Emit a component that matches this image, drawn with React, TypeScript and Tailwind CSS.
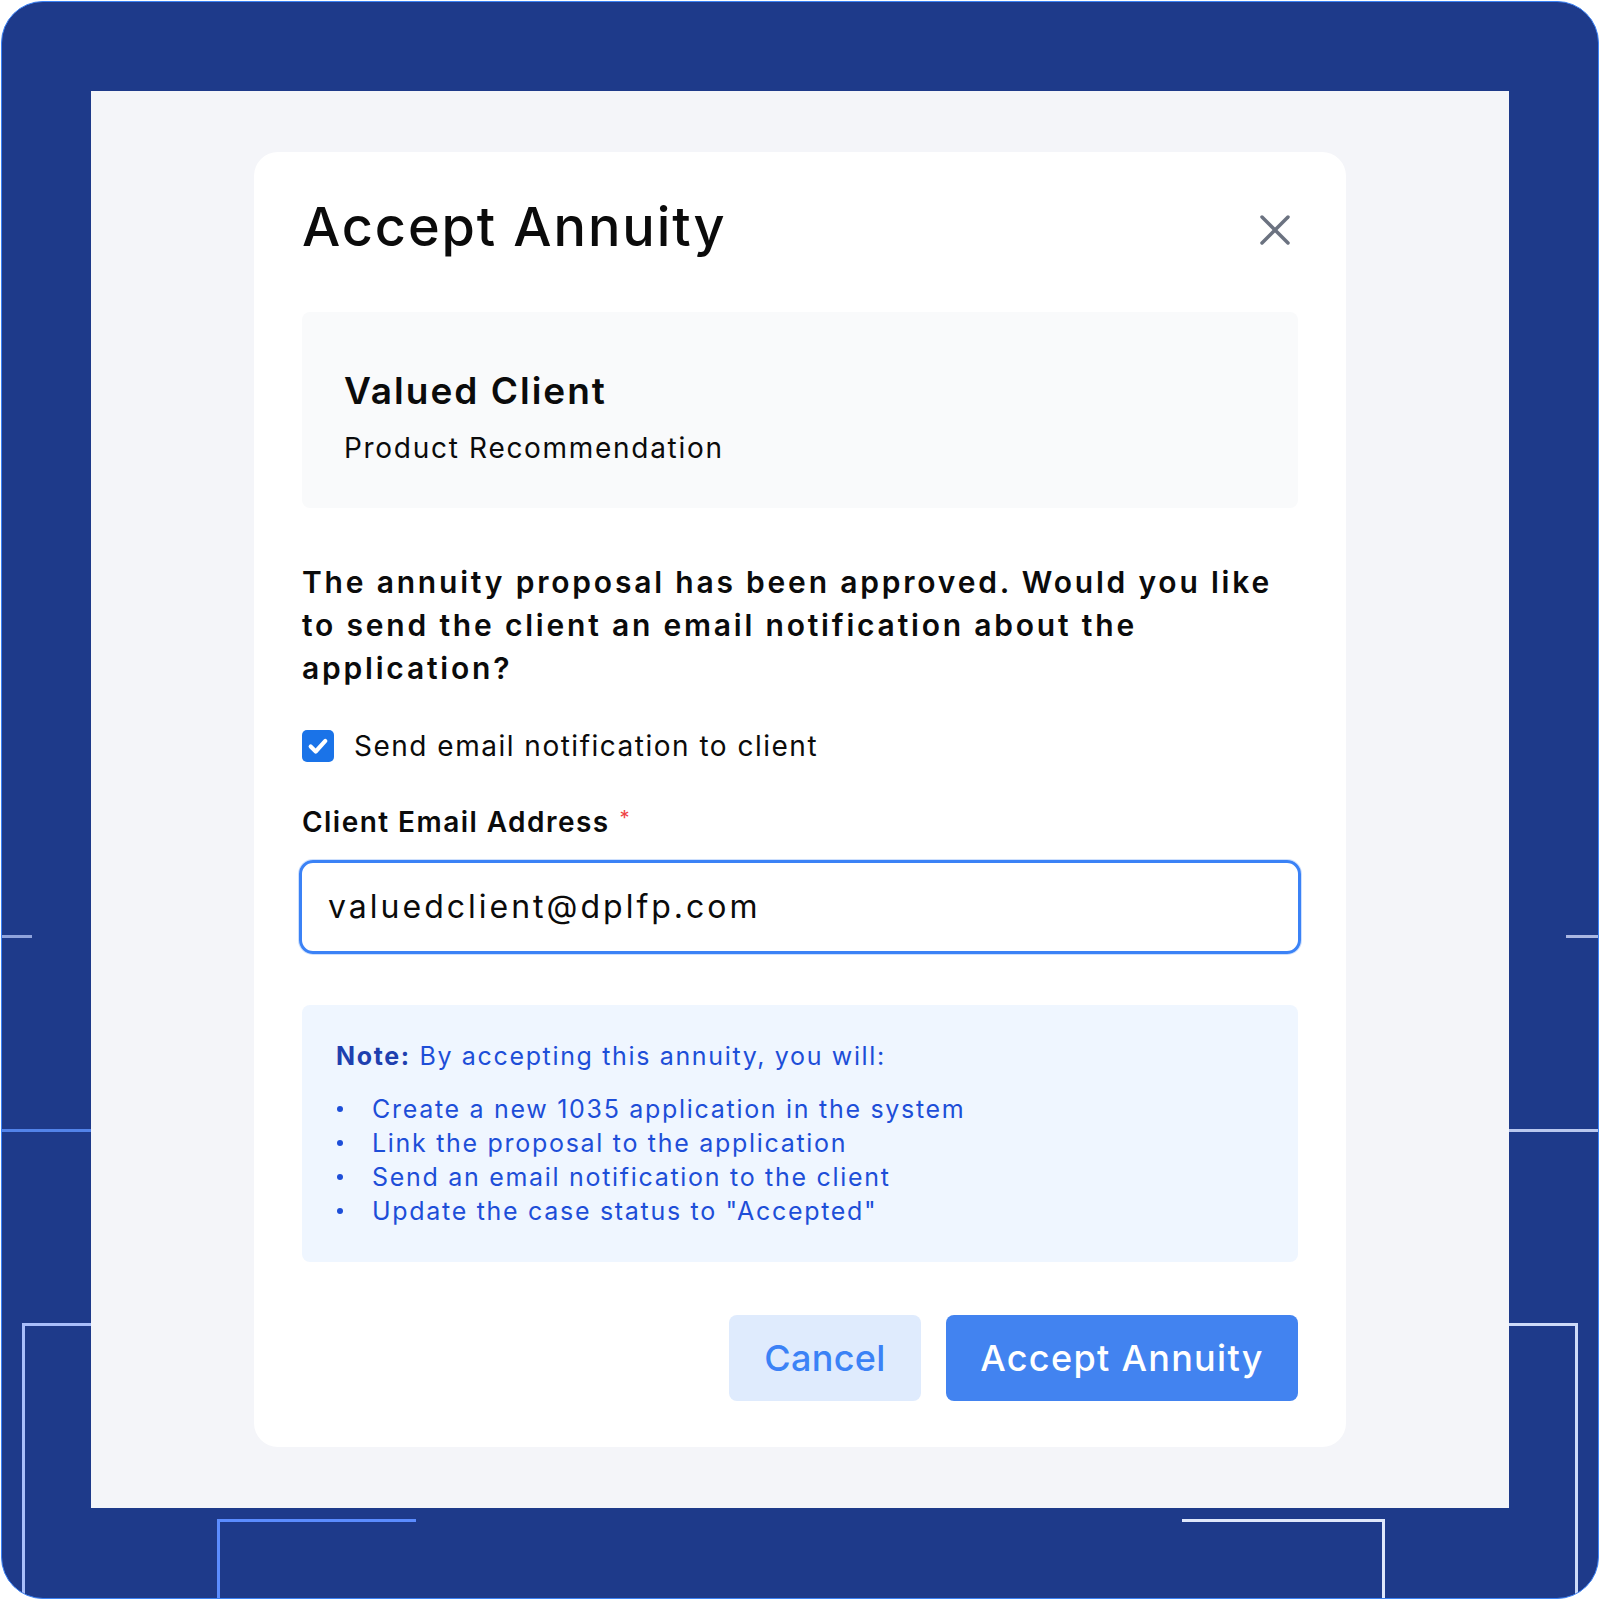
import React, { useState } from 'react';

const font = { fontFamily: 'Inter, "Noto Sans", sans-serif' };

export default function App() {
  const [sendEmail, setSendEmail] = useState(true);
  const [email, setEmail] = useState('valuedclient@dplfp.com');

  const steps = [
    'Create a new 1035 application in the system',
    'Link the proposal to the application',
    'Send an email notification to the client',
    'Update the case status to "Accepted"',
  ];

  return (
    <div className="w-[1600px] h-[1600px] bg-white p-px" style={font}>
      <div className="relative w-full h-full overflow-hidden rounded-[42px] border border-[#3b82f6] bg-[#1e3a8a]">
        {/* decorative lines on the frame */}
        <div className="absolute left-0 top-[933px] w-[30px] h-[3px] bg-[#8fa3dc]" />
        <div className="absolute left-0 top-[1127px] w-[89px] h-[3px] bg-[#5283ea]" />
        <div className="absolute left-[20px] top-[1321px] w-[80px] h-[280px] border-l-[3px] border-t-[3px] border-[#a9befa]" />
        <div className="absolute left-[1564px] top-[933px] w-[34px] h-[3px] bg-[#aab7e3]" />
        <div className="absolute left-[1500px] top-[1127px] w-[98px] h-[3px] bg-[#b9c7ee]" />
        <div className="absolute left-[1500px] top-[1321px] w-[76px] h-[280px] border-r-[3px] border-t-[3px] border-[#cddaf8]" />
        <div className="absolute left-[215px] top-[1517px] w-[199px] h-[90px] border-l-[3px] border-t-[3px] border-[#5b8cff]" />
        <div className="absolute left-[1180px] top-[1517px] w-[203px] h-[90px] border-r-[3px] border-t-[3px] border-[#dfe7fb]" />

        <div className="relative z-10 ml-[89px] mt-[89px] w-[1418px] h-[1417px] bg-[#f4f5f9] flex items-center justify-center">
          <div className="w-[1092px] h-[1295px] bg-white rounded-[24px] px-12 pt-12 flex flex-col">
            <div className="flex items-start justify-between">
              <h1 className="text-[54px] leading-none font-medium text-[#0b0b0b] tracking-[1.9px]">Accept Annuity</h1>
              <button className="mt-[15px] mr-2 w-[30px] h-[30px] text-[#6b7280]">
                <svg width="30" height="30" viewBox="0 0 30 30" fill="none" stroke="currentColor" strokeWidth="3.5" strokeLinecap="round">
                  <path d="M2 2 L28 28" />
                  <path d="M28 2 L2 28" />
                </svg>
              </button>
            </div>

            <div className="mt-[58px] bg-[#f9fafb] rounded-lg pl-[42px] pt-[60px] pb-[46px]">
              <div className="text-[37px] leading-none font-semibold text-[#0b0b0b] tracking-[2px]">Valued Client</div>
              <div className="mt-[25px] text-[28px] leading-none text-[#0b0b0b] tracking-[1.7px]">Product Recommendation</div>
            </div>

            <p className="mt-[53px] text-[30px] leading-[43px] font-semibold text-[#0b0b0b] tracking-[2.8px]">
              The annuity proposal has been approved. Would you like
              <br />
              to send the client an email notification about the
              <br />
              application?
            </p>

            <label className="mt-[40px] flex items-center gap-5 cursor-pointer">
              <span
                onClick={() => setSendEmail(!sendEmail)}
                className={`w-[32px] h-[32px] rounded-[5px] flex items-center justify-center ${sendEmail ? 'bg-[#1a73e8]' : 'bg-white border-2 border-gray-400'}`}
              >
                {sendEmail && (
                  <svg width="22" height="22" viewBox="0 0 24 24" fill="none" stroke="white" strokeWidth="4.5" strokeLinecap="round" strokeLinejoin="round">
                    <path d="M4 12.5 L9.5 18 L20 6.5" />
                  </svg>
                )}
              </span>
              <span className="text-[28px] leading-none text-[#0b0b0b] tracking-[1.5px]">Send email notification to client</span>
            </label>

            <div className="mt-[46px] flex items-start">
              <span className="text-[28px] leading-none font-semibold text-[#0b0b0b] tracking-[1.45px]">Client Email Address</span>
              <span className="ml-[10px] text-[20px] leading-none text-[#ef4444]">*</span>
            </div>

            <div className="mt-[24px] -mx-[3px] h-[94px] border-[3px] border-[#3b82f6] rounded-[14px] flex items-center pl-[26px] shadow-[0_0_0_1px_rgba(59,130,246,0.25)]">
              <input
                value={email}
                onChange={(e) => setEmail(e.target.value)}
                className="w-full bg-transparent outline-none text-[32px] text-[#0b0b0b] tracking-[3px]"
              />
            </div>

            <div className="mt-[51px] bg-[#eff6ff] rounded-lg p-[34px]">
              <div className="text-[25px] leading-[34px] text-[#1d4ed8] tracking-[1.65px]">
                <span className="font-bold text-[#1e40af]">Note:</span> By accepting this annuity, you will:
              </div>
              <ul className="mt-[19px]">
                {steps.map((s) => (
                  <li key={s} className="flex items-center text-[25px] leading-[34px] text-[#1d4ed8] tracking-[1.7px]">
                    <span className="ml-[1px] w-[6px] h-[6px] rounded-full bg-[#1d4ed8]" />
                    <span className="ml-[29px]">{s}</span>
                  </li>
                ))}
              </ul>
            </div>

            <div className="mt-[53px] flex justify-end gap-[25px]">
              <button className="w-[192px] h-[86px] rounded-lg bg-[#dfebfd] text-[36px] font-medium text-[#3b82f6] tracking-[0.3px]">
                Cancel
              </button>
              <button className="w-[352px] h-[86px] rounded-lg bg-[#4283f0] text-[36px] font-medium text-white tracking-[1.3px]">
                Accept Annuity
              </button>
            </div>
          </div>
        </div>
      </div>
    </div>
  );
}
